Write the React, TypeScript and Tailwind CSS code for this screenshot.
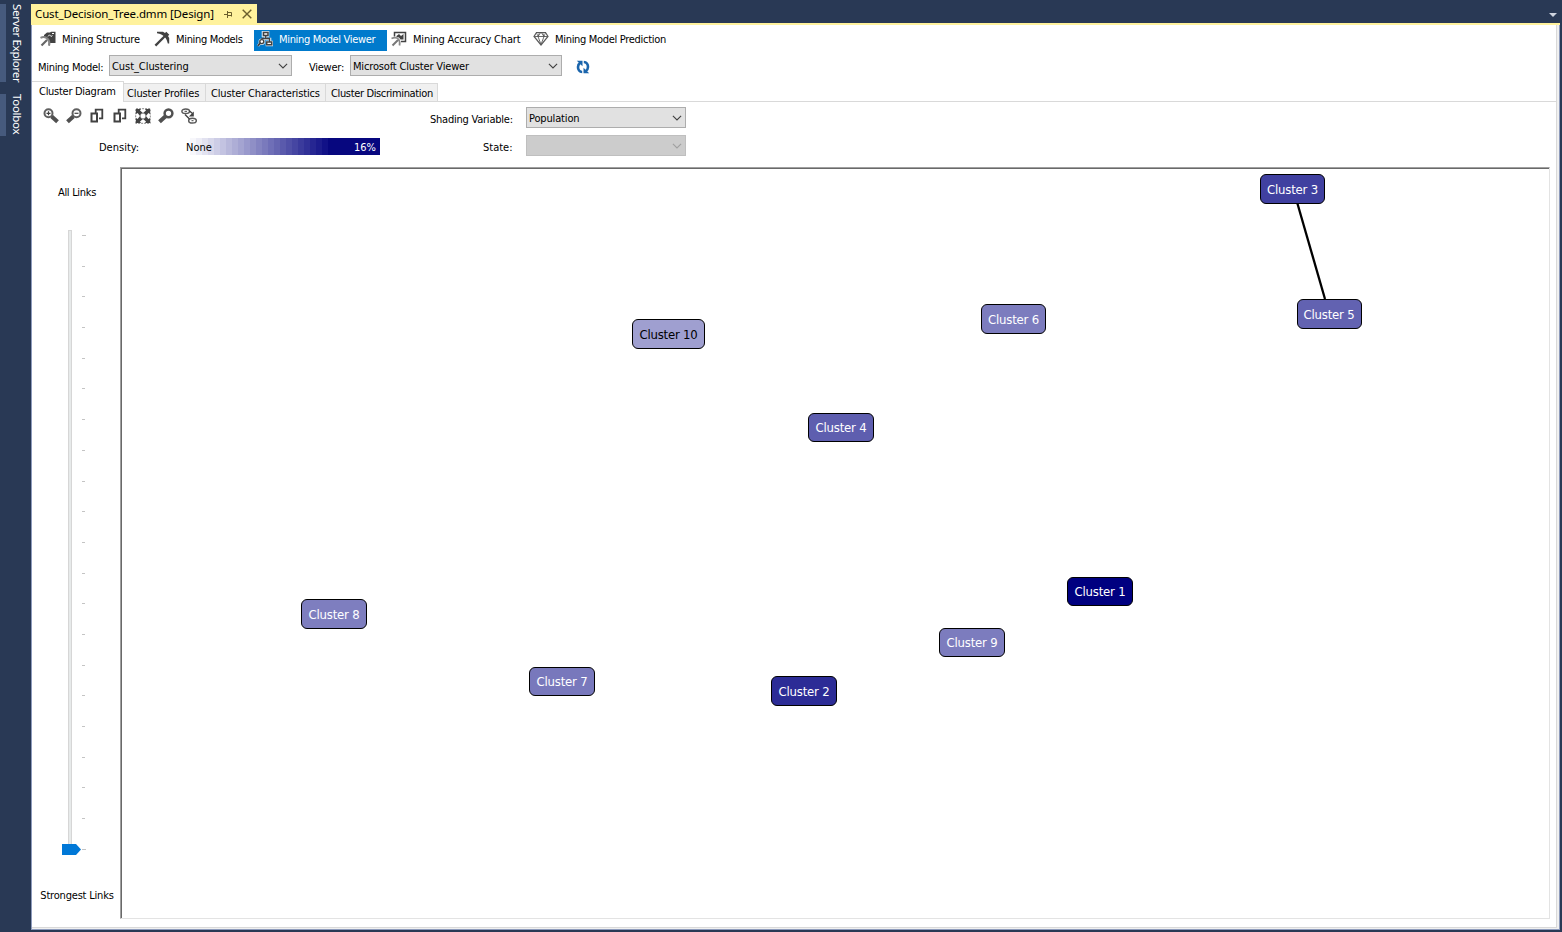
import React from "react";

const INK = "#424242";

type IconProps = { children: React.ReactNode; className?: string };
const Icon = ({ children, className = "" }: IconProps) => (
  <svg viewBox="0 0 16 16" className={`block size-4 shrink-0 ${className}`} fill="none" stroke={INK}>
    {children}
  </svg>
);

const StructureIcon = () => (
  <Icon>
    <path d="M4 5.500V4l3-2.500h3l1-.7h4.500V12H9.800L8.500 8.500 5.500 6.500z" fill={INK} stroke="none" />
    <path d="M8 5.500l1.500-1.700L11 5.500l1.500-1" stroke="#e8e8e8" strokeWidth="1" />
    <path d="M12 2.500h2" stroke="#fff" />
    <path d="M.5 6.800C3 5.500 6 6 7.800 8S9.800 12 9 14.800" strokeWidth="2" stroke="#858585" />
    <path d="M7 9l-5.500 5.500" strokeWidth="2.200" stroke="#666" />
  </Icon>
);

const PickIcon = () => (
  <Icon>
    <path d="M3 .8h6l2 1.200 1.300-1.300 3 3L14 5l1.200 2v5.500h-1.400C13 9.500 12.500 8 10.500 5.800 8.500 3.800 6.500 2.800 3 2.200z" fill={INK} stroke="none" />
    <path d="M11.500 4.500L1.400 14.600" strokeWidth="2.300" />
  </Icon>
);

const ViewerIcon = () => (
  <Icon>
    <g stroke="#d8e8f4" strokeWidth="2.600">
      <path d="M6 1h5v4H6zM8.500 5v3M5 8h8v3M10 11h5v3h-5z" />
      <circle cx="4.800" cy="10.800" r="2" />
      <path d="M3 12.500L1 14.800" />
    </g>
    <path d="M6.500 1.500h4.500v3H6.500z" fill="#fff" strokeWidth="1.500" />
    <path d="M8.700 5v2.500M5 8V7.500h7.500V11" strokeWidth="1.300" />
    <path d="M9.700 11h5v2.800h-5z" fill="#fff" strokeWidth="1.500" />
    <circle cx="4.800" cy="10.600" r="2" fill="#fff" strokeWidth="1.400" />
    <path d="M3.300 12.100L.8 14.800" strokeWidth="1.700" />
  </Icon>
);

const ChartIcon = () => (
  <Icon>
    <path d="M3.500 5.500V1.500h11v9H10" strokeWidth="1.500" />
    <path d="M5.500 6V5l2.500-2 2 2 2.500-2v5.500H9.500L8 6.500z" fill={INK} stroke="none" />
    <path d="M.5 7.500C3 6.300 6 6.500 7.500 8.300S9 12 8.500 14.500" strokeWidth="1.700" stroke="#8a8a8a" />
    <path d="M7 9l-5.500 5.500" strokeWidth="1.900" stroke="#777" />
  </Icon>
);

const GemIcon = () => (
  <Icon>
    <path d="M3.500 1.500h9l2.500 4-7 8.500-7-8.500z" strokeWidth="1.200" stroke="#5a5a5a" />
    <path d="M1 5.500h14M6.500 1.500l-1.500 4 3 8 3-8-1.500-4" strokeWidth=".9" stroke="#5a5a5a" />
    <path d="M3.500 1.500L5 5.500l3-4 3 4 1.500-4" strokeWidth=".6" />
  </Icon>
);

const RefreshIcon = () => (
  <svg viewBox="0 0 14 14" className="block size-3.5" fill="none" stroke="#1b65ac" strokeWidth="2.600">
    <path d="M6.200 12C3.500 12 1.900 9.800 2 7c.1-1.800 1-3.500 2.200-4.200" />
    <path d="M7.800 2C10.500 2 12.100 4.200 12 7c-.1 1.800-1 3.500-2.200 4.200" />
    <path d="M.8.800h5.700v5.500z" fill="#1b65ac" stroke="none" />
    <path d="M13.200 13.200H7.500V7.700z" fill="#1b65ac" stroke="none" />
  </svg>
);

const ZoomInIcon = () => (
  <Icon>
    <circle cx="5.500" cy="5.300" r="4" strokeWidth="2" stroke="#606060" />
    <path d="M3.500 5.300h4M5.500 3.300v4" strokeWidth="1.200" />
    <path d="M8.700 8.500l5.800 5.300" strokeWidth="4" stroke="#505050" />
  </Icon>
);
const ZoomOutIcon = () => (
  <Icon>
    <circle cx="10.500" cy="5.300" r="4" strokeWidth="2" stroke="#606060" />
    <path d="M8.500 5.300h4" strokeWidth="1.200" />
    <path d="M7.300 8.500L1.500 13.800" strokeWidth="4" stroke="#505050" />
  </Icon>
);
const MagnifierIcon = () => (
  <Icon>
    <circle cx="10.500" cy="5.300" r="3.900" strokeWidth="2.500" stroke="#505050" />
    <path d="M7.300 8.500L1.500 13.800" strokeWidth="4" stroke="#505050" />
  </Icon>
);
const CopyIcon = () => (
  <Icon>
    <path d="M6.700 5V1.700h6.600v8.600H10" strokeWidth="1.800" />
    <path d="M2.500 5.500h5.500v8H2.500z" strokeWidth="2" />
  </Icon>
);
const FitIcon = () => (
  <Icon>
    <path d="M.7 15.300V.7h14.600v14.600z" stroke="#8a8a8a" strokeDasharray="2 1" />
    <path d="M1 6V1h5L5 2.600l3 2.400 3-2.400L10 1h5v5l-1.600-1L11 8l2.400 3 1.600-1v5h-5l1-1.600L8 11l-3 2.400L6 15H1v-5l1.600 1L5 8 2.600 5z" fill={INK} stroke="none" />
    <path d="M5.500 5.500h5v5h-5z" fill="#fff" stroke="none" />
    <path d="M4 4l2.200 2.200M12 4L9.800 6.200M4 12l2.200-2.200M12 12L9.800 9.800" strokeWidth="1.400" />
  </Icon>
);
const LinksIcon = () => (
  <Icon>
    <ellipse cx="4.700" cy="3.300" rx="3.800" ry="2.300" strokeWidth="1.500" stroke="#5a5a5a" />
    <ellipse cx="11.500" cy="12.700" rx="3.800" ry="2.400" strokeWidth="1.500" stroke="#5a5a5a" />
    <path d="M8.500 3l3 2.500M4 6.500l4.500 4.500" strokeWidth="1.400" />
    <path d="M12.800 3.500v5H7.800z" fill={INK} stroke="none" />
    <path d="M3.500 3.300H6M10.500 12.700h2" />
  </Icon>
);

const Chevron = ({ faded = false }: { faded?: boolean }) => (
  <svg viewBox="0 0 10 6" className="block h-1.5 w-2.5 shrink-0" fill="none" stroke={faded ? "#a0a0a0" : "#404040"} strokeWidth="1.100">
    <path d="M.9.800L5 4.900 9.100.8" />
  </svg>
);

const Combo = ({ text, className, faded = false }: { text?: string; className: string; faded?: boolean }) => (
  <div
    className={`flex h-[21px] shrink-0 items-center justify-between border pr-[3px] pl-[2px] ${
      faded ? "border-[#bfbfbf] bg-[#cccccc]" : "border-[#adadad] bg-[#e1e1e1]"
    } ${className}`}
  >
    <span className="pt-[2px]">{text}</span>
    <Chevron faded={faded} />
  </div>
);

const views = [
  { label: "Mining Structure", icon: <StructureIcon />, box: "ml-[6px] w-[114px]", track: "tracking-[-0.27px]", selected: false },
  { label: "Mining Models", icon: <PickIcon />, box: "w-[102px]", track: "tracking-[-0.33px]", selected: false },
  { label: "Mining Model Viewer", icon: <ViewerIcon />, box: "w-[133px]", track: "tracking-[-0.33px]", selected: true },
  { label: "Mining Accuracy Chart", icon: <ChartIcon />, box: "ml-[2px] w-[142px]", track: "tracking-[-0.2px]", selected: false },
  { label: "Mining Model Prediction", icon: <GemIcon />, box: "w-[150px]", track: "tracking-[-0.31px]", selected: false },
];

const tabs = [
  { label: "Cluster Profiles", box: "w-[82px] pl-[3px] tracking-[-0.12px]" },
  { label: "Cluster Characteristics", box: "w-[120px] pl-[5px] tracking-[-0.15px]" },
  { label: "Cluster Discrimination", box: "w-[112px] pl-[5px] tracking-[-0.36px]" },
];

const tools = [ZoomInIcon, ZoomOutIcon, CopyIcon, CopyIcon, FitIcon, MagnifierIcon, LinksIcon];

const nodes = [
  { id: 3, place: "left-[1138px] top-[5px] w-[65px] pt-[2px]", tone: "bg-[#4040a0] text-white" },
  { id: 5, place: "left-[1174.5px] top-[130px] w-[65px] pt-[2px]", tone: "bg-[#6262b1] text-white" },
  { id: 6, place: "left-[859px] top-[135px] w-[65px] pt-[2px]", tone: "bg-[#7c7cbe] text-white" },
  { id: 10, place: "left-[510px] top-[150px] w-[73px] pt-[2px]", tone: "bg-[#9f9fd0] text-black" },
  { id: 4, place: "left-[686px] top-[243.5px] w-[66px] pt-px", tone: "bg-[#5e5eaf] text-white" },
  { id: 1, place: "left-[945px] top-[407.5px] w-[66px] pt-px", tone: "bg-[#000080] text-white" },
  { id: 8, place: "left-[179px] top-[430px] w-[66px] pt-[2px]", tone: "bg-[#7e7ebf] text-white" },
  { id: 9, place: "left-[817px] top-[458.5px] w-[66px] pt-px", tone: "bg-[#7c7cbe] text-white" },
  { id: 7, place: "left-[407px] top-[497.5px] w-[66px] pt-px", tone: "bg-[#7878bc] text-white" },
  { id: 2, place: "left-[649px] top-[507px] w-[66px] pt-[2px]", tone: "bg-[#2c2c96] text-white" },
];

const STEPS = 23;
const shade = (i: number) => {
  const v = Math.round(247 - (i * 240) / STEPS);
  return `rgb(${v}, ${v}, ${Math.round(251 - (i * 121) / STEPS)})`;
};

export default function App() {
  return (
    <div className="flex h-[932px] w-[1562px] overflow-hidden bg-[#293955] font-['DejaVu_Sans_Condensed','DejaVu_Sans',sans-serif] text-[11px] leading-[14px] whitespace-nowrap text-black [font-stretch:condensed]">
      <aside className="flex w-[31px] shrink-0 flex-col items-start gap-3 pt-1 font-['Noto_Sans',sans-serif] text-[11.500px] leading-[18px] tracking-[-0.3px] text-white">
        <div className="flex h-[78px] w-[26px] items-start border-l-[6px] border-[#465a7d] [writing-mode:vertical-rl]">
          <span>Server Explorer</span>
        </div>
        <div className="flex h-[42px] w-[26px] items-start border-l-[6px] border-[#465a7d] [writing-mode:vertical-rl]">
          <span>Toolbox</span>
        </div>
      </aside>

      <div className="flex w-[1529px] shrink-0 flex-col">
        <div className="flex h-[23px] items-end justify-between">
          <div className="flex h-[19px] w-[226px] items-center bg-[#fff29d] pt-px pl-1">
            <span className="w-[189px] font-['Noto_Sans',sans-serif] text-[11.500px] leading-[18px] tracking-[-0.14px]">
              Cust_Decision_Tree.dmm [Design]
            </span>
            <svg viewBox="0 0 9 8" className="h-2 w-[9px] shrink-0" fill="none" stroke="#6b5f2c">
              <path d="M0 4.500h3M3.500 1v7M3.500 2.500h4v4M3.500 5.500h4.500" />
            </svg>
            <svg viewBox="0 0 10 10" className="mb-px ml-[9px] size-2.5 shrink-0" fill="none" stroke="#6b5f2c" strokeWidth="1.400">
              <path d="M.7.7l8.600 8.600M9.300.7L.7 9.300" />
            </svg>
          </div>
          <svg viewBox="0 0 8 4" className="mr-[3px] mb-[6px] h-1 w-2">
            <path d="M0 0h8L4 4z" fill="#ced4df" />
          </svg>
        </div>
        <div className="h-[2px] bg-[#fff29d]" />

        <div className="flex h-[905px] flex-col border-r border-b border-l border-[#8e9bbc] bg-[#f0f0f0] pr-[2px] pb-px">
          <main className="flex grow flex-col border-r border-b border-[#d9d9d9] bg-white">
            <div className="flex h-[27px] pt-[5px]">
              {views.map((v) => (
                <div
                  key={v.label}
                  className={`flex h-[21px] shrink-0 items-center pb-[3px] ${v.box} ${v.selected ? "bg-[#007acc] pl-[3px] text-white" : "pl-[2px]"}`}
                >
                  {v.icon}
                  <span className={`ml-1.5 pt-[2px] ${v.track}`}>{v.label}</span>
                </div>
              ))}
            </div>

            <div className="flex h-[29px] items-start pt-[3px] pl-[6px]">
              <span className="w-[71px] pt-[6px] tracking-[-0.3px]">Mining Model:</span>
              <Combo text="Cust_Clustering" className="w-[183px] tracking-[-0.06px]" />
              <span className="ml-[17px] w-[41px] pt-[6px] tracking-[-0.25px]">Viewer:</span>
              <Combo text="Microsoft Cluster Viewer" className="w-[212px] tracking-[-0.17px]" />
              <div className="pt-[5px] pl-[14px]">
                <RefreshIcon />
              </div>
            </div>

            <div className="flex h-[21px] items-end">
              <div className="h-[21px] w-[92px] border-t border-r border-[#d9d9d9] pt-[3px] pl-[7px] tracking-[-0.28px]">Cluster Diagram</div>
              <div className="flex h-[19px] flex-1 border-b border-[#d9d9d9]">
                {tabs.map((t) => (
                  <div key={t.label} className={`h-[18px] border-t border-r border-[#d9d9d9] bg-[#f0f0f0] pt-[3px] ${t.box}`}>
                    {t.label}
                  </div>
                ))}
              </div>
            </div>

            <div className="flex h-[65px]">
              <div className="flex w-[398px] flex-col">
                <div className="flex gap-[7px] pt-[6px] pl-[11px]">
                  {tools.map((Tool, i) => (
                    <Tool key={i} />
                  ))}
                </div>
                <div className="flex pt-[14px] pl-[67px]">
                  <span className="w-[91px] pt-[3px]">Density:</span>
                  <div className="flex h-[17px] w-[190px] bg-[#07077f]">
                    {Array.from({ length: STEPS }, (_, i) => (
                      <div key={i} className="h-[17px] w-[6px] shrink-0" style={{ background: shade(i) }} />
                    ))}
                    <span className="w-[52px] pt-[3px] pr-[4px] text-right text-white">16%</span>
                  </div>
                  <span className="relative -left-[194px] w-0 pt-[3px]">None</span>
                </div>
              </div>
              <div className="flex flex-col gap-[7px] pt-[5px]">
                <div className="flex">
                  <span className="w-[96px] pt-[6px] tracking-[-0.23px]">Shading Variable:</span>
                  <Combo text="Population" className="w-[160px] tracking-[-0.15px]" />
                </div>
                <div className="flex">
                  <span className="w-[96px] pt-[6px] pl-[53px]">State:</span>
                  <Combo className="w-[160px]" faded />
                </div>
              </div>
            </div>

            <div className="flex h-[752px]">
              <div className="flex w-[88px] flex-col items-center">
                <span className="mt-[19px] h-[14px] pl-[2px] tracking-[-0.3px]">All Links</span>
                <div className="mt-[29px] flex h-[627px] w-[88px] pl-[30px]">
                  <div className="flex w-[19px] flex-col items-center pt-px">
                    <div className="ml-[-3px] h-[614px] w-[4px] border border-b-0 border-[#d6d6d6] bg-[#e7eaea]" />
                    <svg viewBox="0 0 19 11" className="block h-[11px] w-[19px] shrink-0">
                      <path d="M0 0h14l5 5.500-5 5.500H0z" fill="#0078d7" />
                    </svg>
                  </div>
                  <div className="flex h-[621px] flex-col justify-between pt-[6px] pl-[1px]">
                    {Array.from({ length: 21 }, (_, i) => (
                      <div key={i} className={`h-px bg-[#c4c4c4] ${i === 0 || i === 20 ? "w-[4px]" : "w-[3px]"}`} />
                    ))}
                  </div>
                </div>
                <span className="mt-[33px] pl-[2px] tracking-[-0.2px]">Strongest Links</span>
              </div>

              <div className="h-[752px] w-[1430px] border border-t-[#a0a0a0] border-r-[#e3e3e3] border-b-[#e3e3e3] border-l-[#a0a0a0]">
                <div className="relative h-full w-full border-t border-l border-[#696969] text-[13px]">
                  <svg className="absolute top-0 left-0" width="1426" height="748">
                    <path d="M1175 33L1203 130" stroke="#000" strokeWidth="2.300" />
                  </svg>
                  {nodes.map((n) => (
                    <div
                      key={n.id}
                      className={`absolute flex h-[29.500px] items-center justify-center rounded-[6px] border border-black tracking-[-0.2px] ${n.place} ${n.tone}`}
                    >
                      Cluster {n.id}
                    </div>
                  ))}
                </div>
              </div>
            </div>
          </main>
        </div>
      </div>
    </div>
  );
}
